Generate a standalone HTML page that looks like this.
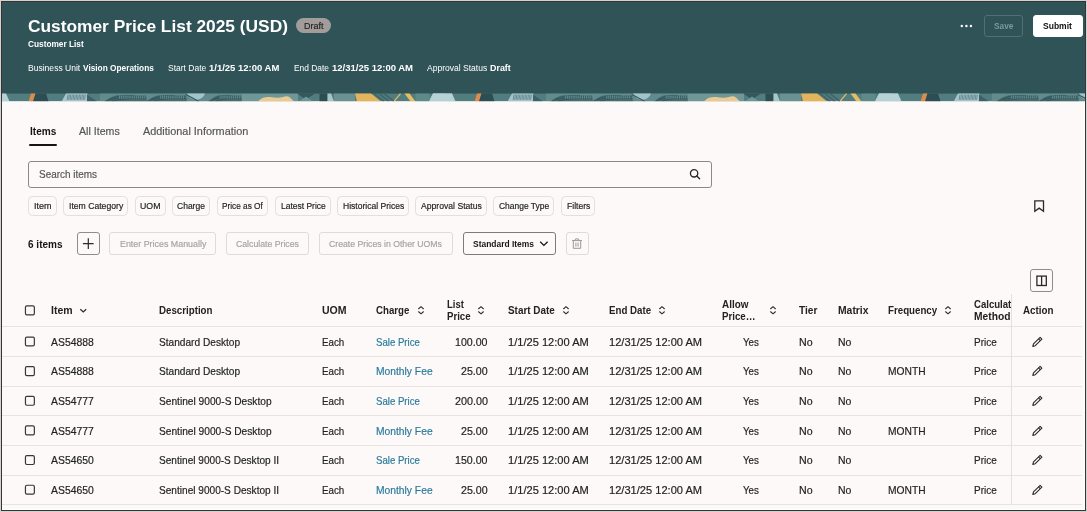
<!DOCTYPE html>
<html lang="en">
<head>
<meta charset="utf-8">
<title>Customer Price List 2025 (USD)</title>
<style>
html,body{margin:0;padding:0}
body{width:1087px;height:512px;overflow:hidden;background:#d2d2d2;font-family:"Liberation Sans",sans-serif}
.page{position:absolute;left:0;top:0;width:1087px;height:512px;overflow:hidden;will-change:transform}
.frame{position:absolute;left:1px;top:1px;width:1083px;height:508px;border:1px solid #353535;background:#fff}
.bg{position:absolute;left:2px;top:2px;width:1082px;height:507px;background:#fcf9f8}
.hdr{position:absolute;left:2px;top:2px;width:1083px;height:92px;background:#305357}
.strip{position:absolute;left:2px;top:93px;width:1083px;height:9px;display:block}
.r{-webkit-text-stroke:0.18px currentColor}
.t{position:absolute;display:block;white-space:pre;line-height:14px;height:14px;transform-origin:0 0}
.box{position:absolute;box-sizing:border-box;border:1px solid #dedbd8;border-radius:4px}
.badge{position:absolute;left:296.4px;top:17.9px;width:34.6px;height:14.9px;border-radius:8px;background:#a29d9a}
.line{position:absolute;left:2px;width:1080px;height:1px;background:#e6e3e0}
.cb{position:absolute;left:24.9px;width:9.9px;height:9.9px;box-sizing:border-box;border:1.2px solid #3a3632;border-radius:2px}
svg.i{position:absolute;overflow:visible}
</style>
</head>
<body>
<div class="page">
<div class="frame"></div>
<div class="bg"></div>
<header class="hdr"></header>
<svg class="strip" width="1083" height="9" viewBox="2 -0.6 1083 9" preserveAspectRatio="none"><rect x="0" y="-1" width="1090" height="1.2" fill="#305357"/><g transform="scale(1 0.975)"><g transform="translate(0 0)"><rect x="0" y="0" width="446" height="8" fill="#527d7e"/><polygon points="-13,0 6,0 9.5,8 -17,8" fill="#b6d2d7"/><polygon points="433,0 452,0 455.5,8 429,8" fill="#b6d2d7"/><polygon points="31,0 35.5,0 33,8 28.5,8" fill="#e08b4c"/><polygon points="35.5,0 46,0 48.5,8 33,8" fill="#2c4d52"/><polygon points="66,0 87.4,0 87.4,8 61.6,8" fill="#a6c5ca"/><path d="M68 1L67.2 6.4M69.45 1L68.65 6.4M70.9 1L70.1 6.4M72.35 1L71.55 6.4M73.8 1L73 6.4M75.25 1L74.45 6.4M76.7 1L75.9 6.4M78.15 1L77.35 6.4M79.6 1L78.8 6.4M81.05 1L80.25 6.4M82.5 1L81.7 6.4M83.95 1L83.15 6.4M85.4 1L84.6 6.4" stroke="#4f7378" stroke-width="0.7"/><polygon points="87,0.8 97,8 87,8" fill="#3d6165"/><rect x="100" y="0" width="142" height="8" fill="#628c8c"/><path d="M104 8 Q111.74 2.2 118.62 1.4 L146 1.8 L147 8 Z" fill="#456c6f"/><path d="M106 7.6 Q121.2 2.5 145 3.2 M112 7.8 Q125.5 4 146 5.2 M109 6 Q119.05 1 134.1 2" stroke="#2e5155" stroke-width="0.8" fill="none"/><path d="M119.48 1.8V5.2M121.38 1.8V5.2M123.28 1.8V5.2M125.18 1.8V5.2M127.08 1.8V5.2M128.98 1.8V5.2M130.88 1.8V5.2M132.78 1.8V5.2M134.68 1.8V5.2M136.58 1.8V5.2M138.48 1.8V5.2M140.38 1.8V5.2M142.28 1.8V5.2M144.18 1.8V5.2" stroke="#7fa3a4" stroke-width="0.6"/><path d="M146 8 Q153.38 2.2 159.94 1.4 L186 1.8 L187 8 Z" fill="#456c6f"/><path d="M148 7.6 Q162.4 2.5 185 3.2 M154 7.8 Q166.5 4 186 5.2 M151 6 Q160.35 1 174.7 2" stroke="#2e5155" stroke-width="0.8" fill="none"/><path d="M160.76 1.8V5.2M162.66 1.8V5.2M164.56 1.8V5.2M166.46 1.8V5.2M168.36 1.8V5.2M170.26 1.8V5.2M172.16 1.8V5.2M174.06 1.8V5.2M175.96 1.8V5.2M177.86 1.8V5.2M179.76 1.8V5.2M181.66 1.8V5.2M183.56 1.8V5.2" stroke="#7fa3a4" stroke-width="0.6"/><path d="M208 8 Q214.12 2.2 219.56 1.4 L241 1.8 L242 8 Z" fill="#456c6f"/><path d="M210 7.6 Q221.6 2.5 240 3.2 M216 7.8 Q225 4 241 5.2 M213 6 Q219.9 1 231.8 2" stroke="#2e5155" stroke-width="0.8" fill="none"/><path d="M220.24 1.8V5.2M222.14 1.8V5.2M224.04 1.8V5.2M225.94 1.8V5.2M227.84 1.8V5.2M229.74 1.8V5.2M231.64 1.8V5.2M233.54 1.8V5.2M235.44 1.8V5.2M237.34 1.8V5.2M239.24 1.8V5.2" stroke="#7fa3a4" stroke-width="0.6"/><path d="M187 0 H205 Q203 6 196 6.5 Q189 6 187 0Z" fill="#a3c4cc"/><path d="M186 1 L199 8" stroke="#34585c" stroke-width="1.2"/><rect x="242" y="0" width="56" height="8" fill="#6f9797"/><path d="M258 8 Q262 3 270 3.5 Q278 5 283 3.5 Q287 1.5 290 4 L294 8 Z" fill="#e9ca92"/><polygon points="297,0 315,0 306,6" fill="#35575b"/><polygon points="299,8 306,3 313,8" fill="#6f9797"/><rect x="319.5" y="0" width="8" height="8" fill="#2c4d52"/><polygon points="327.5,0 331,0 334,8 327.5,8" fill="#a8c6ca"/><rect x="334" y="0" width="21" height="8" fill="#6b9292"/><polygon points="355,0 371,0 381,8 357,8" fill="#e3b45c"/><path d="M374 0 L384 8 M379 0 L389 8 M384 0 L394 8" stroke="#3f6669" stroke-width="1.6"/><path d="M394 8 L400.5 0" stroke="#e6bd63" stroke-width="1.2"/><polygon points="404.5,0 409.5,0 415.5,8 410.5,8" fill="#e6bd63"/><rect x="415.5" y="0" width="14" height="8" fill="#5f8a8a"/></g><g transform="translate(446 0)"><rect x="0" y="0" width="446" height="8" fill="#527d7e"/><polygon points="-13,0 6,0 9.5,8 -17,8" fill="#b6d2d7"/><polygon points="433,0 452,0 455.5,8 429,8" fill="#b6d2d7"/><polygon points="31,0 35.5,0 33,8 28.5,8" fill="#e08b4c"/><polygon points="35.5,0 46,0 48.5,8 33,8" fill="#2c4d52"/><polygon points="66,0 87.4,0 87.4,8 61.6,8" fill="#a6c5ca"/><path d="M68 1L67.2 6.4M69.45 1L68.65 6.4M70.9 1L70.1 6.4M72.35 1L71.55 6.4M73.8 1L73 6.4M75.25 1L74.45 6.4M76.7 1L75.9 6.4M78.15 1L77.35 6.4M79.6 1L78.8 6.4M81.05 1L80.25 6.4M82.5 1L81.7 6.4M83.95 1L83.15 6.4M85.4 1L84.6 6.4" stroke="#4f7378" stroke-width="0.7"/><polygon points="87,0.8 97,8 87,8" fill="#3d6165"/><rect x="100" y="0" width="142" height="8" fill="#628c8c"/><path d="M104 8 Q111.74 2.2 118.62 1.4 L146 1.8 L147 8 Z" fill="#456c6f"/><path d="M106 7.6 Q121.2 2.5 145 3.2 M112 7.8 Q125.5 4 146 5.2 M109 6 Q119.05 1 134.1 2" stroke="#2e5155" stroke-width="0.8" fill="none"/><path d="M119.48 1.8V5.2M121.38 1.8V5.2M123.28 1.8V5.2M125.18 1.8V5.2M127.08 1.8V5.2M128.98 1.8V5.2M130.88 1.8V5.2M132.78 1.8V5.2M134.68 1.8V5.2M136.58 1.8V5.2M138.48 1.8V5.2M140.38 1.8V5.2M142.28 1.8V5.2M144.18 1.8V5.2" stroke="#7fa3a4" stroke-width="0.6"/><path d="M146 8 Q153.38 2.2 159.94 1.4 L186 1.8 L187 8 Z" fill="#456c6f"/><path d="M148 7.6 Q162.4 2.5 185 3.2 M154 7.8 Q166.5 4 186 5.2 M151 6 Q160.35 1 174.7 2" stroke="#2e5155" stroke-width="0.8" fill="none"/><path d="M160.76 1.8V5.2M162.66 1.8V5.2M164.56 1.8V5.2M166.46 1.8V5.2M168.36 1.8V5.2M170.26 1.8V5.2M172.16 1.8V5.2M174.06 1.8V5.2M175.96 1.8V5.2M177.86 1.8V5.2M179.76 1.8V5.2M181.66 1.8V5.2M183.56 1.8V5.2" stroke="#7fa3a4" stroke-width="0.6"/><path d="M208 8 Q214.12 2.2 219.56 1.4 L241 1.8 L242 8 Z" fill="#456c6f"/><path d="M210 7.6 Q221.6 2.5 240 3.2 M216 7.8 Q225 4 241 5.2 M213 6 Q219.9 1 231.8 2" stroke="#2e5155" stroke-width="0.8" fill="none"/><path d="M220.24 1.8V5.2M222.14 1.8V5.2M224.04 1.8V5.2M225.94 1.8V5.2M227.84 1.8V5.2M229.74 1.8V5.2M231.64 1.8V5.2M233.54 1.8V5.2M235.44 1.8V5.2M237.34 1.8V5.2M239.24 1.8V5.2" stroke="#7fa3a4" stroke-width="0.6"/><path d="M187 0 H205 Q203 6 196 6.5 Q189 6 187 0Z" fill="#a3c4cc"/><path d="M186 1 L199 8" stroke="#34585c" stroke-width="1.2"/><rect x="242" y="0" width="56" height="8" fill="#6f9797"/><path d="M258 8 Q262 3 270 3.5 Q278 5 283 3.5 Q287 1.5 290 4 L294 8 Z" fill="#e9ca92"/><polygon points="297,0 315,0 306,6" fill="#35575b"/><polygon points="299,8 306,3 313,8" fill="#6f9797"/><rect x="319.5" y="0" width="8" height="8" fill="#2c4d52"/><polygon points="327.5,0 331,0 334,8 327.5,8" fill="#a8c6ca"/><rect x="334" y="0" width="21" height="8" fill="#6b9292"/><polygon points="355,0 371,0 381,8 357,8" fill="#e3b45c"/><path d="M374 0 L384 8 M379 0 L389 8 M384 0 L394 8" stroke="#3f6669" stroke-width="1.6"/><path d="M394 8 L400.5 0" stroke="#e6bd63" stroke-width="1.2"/><polygon points="404.5,0 409.5,0 415.5,8 410.5,8" fill="#e6bd63"/><rect x="415.5" y="0" width="14" height="8" fill="#5f8a8a"/></g><g transform="translate(892 0)"><rect x="0" y="0" width="446" height="8" fill="#527d7e"/><polygon points="-13,0 6,0 9.5,8 -17,8" fill="#b6d2d7"/><polygon points="433,0 452,0 455.5,8 429,8" fill="#b6d2d7"/><polygon points="31,0 35.5,0 33,8 28.5,8" fill="#e08b4c"/><polygon points="35.5,0 46,0 48.5,8 33,8" fill="#2c4d52"/><polygon points="66,0 87.4,0 87.4,8 61.6,8" fill="#a6c5ca"/><path d="M68 1L67.2 6.4M69.45 1L68.65 6.4M70.9 1L70.1 6.4M72.35 1L71.55 6.4M73.8 1L73 6.4M75.25 1L74.45 6.4M76.7 1L75.9 6.4M78.15 1L77.35 6.4M79.6 1L78.8 6.4M81.05 1L80.25 6.4M82.5 1L81.7 6.4M83.95 1L83.15 6.4M85.4 1L84.6 6.4" stroke="#4f7378" stroke-width="0.7"/><polygon points="87,0.8 97,8 87,8" fill="#3d6165"/><rect x="100" y="0" width="142" height="8" fill="#628c8c"/><path d="M104 8 Q111.74 2.2 118.62 1.4 L146 1.8 L147 8 Z" fill="#456c6f"/><path d="M106 7.6 Q121.2 2.5 145 3.2 M112 7.8 Q125.5 4 146 5.2 M109 6 Q119.05 1 134.1 2" stroke="#2e5155" stroke-width="0.8" fill="none"/><path d="M119.48 1.8V5.2M121.38 1.8V5.2M123.28 1.8V5.2M125.18 1.8V5.2M127.08 1.8V5.2M128.98 1.8V5.2M130.88 1.8V5.2M132.78 1.8V5.2M134.68 1.8V5.2M136.58 1.8V5.2M138.48 1.8V5.2M140.38 1.8V5.2M142.28 1.8V5.2M144.18 1.8V5.2" stroke="#7fa3a4" stroke-width="0.6"/><path d="M146 8 Q153.38 2.2 159.94 1.4 L186 1.8 L187 8 Z" fill="#456c6f"/><path d="M148 7.6 Q162.4 2.5 185 3.2 M154 7.8 Q166.5 4 186 5.2 M151 6 Q160.35 1 174.7 2" stroke="#2e5155" stroke-width="0.8" fill="none"/><path d="M160.76 1.8V5.2M162.66 1.8V5.2M164.56 1.8V5.2M166.46 1.8V5.2M168.36 1.8V5.2M170.26 1.8V5.2M172.16 1.8V5.2M174.06 1.8V5.2M175.96 1.8V5.2M177.86 1.8V5.2M179.76 1.8V5.2M181.66 1.8V5.2M183.56 1.8V5.2" stroke="#7fa3a4" stroke-width="0.6"/><path d="M208 8 Q214.12 2.2 219.56 1.4 L241 1.8 L242 8 Z" fill="#456c6f"/><path d="M210 7.6 Q221.6 2.5 240 3.2 M216 7.8 Q225 4 241 5.2 M213 6 Q219.9 1 231.8 2" stroke="#2e5155" stroke-width="0.8" fill="none"/><path d="M220.24 1.8V5.2M222.14 1.8V5.2M224.04 1.8V5.2M225.94 1.8V5.2M227.84 1.8V5.2M229.74 1.8V5.2M231.64 1.8V5.2M233.54 1.8V5.2M235.44 1.8V5.2M237.34 1.8V5.2M239.24 1.8V5.2" stroke="#7fa3a4" stroke-width="0.6"/><path d="M187 0 H205 Q203 6 196 6.5 Q189 6 187 0Z" fill="#a3c4cc"/><path d="M186 1 L199 8" stroke="#34585c" stroke-width="1.2"/><rect x="242" y="0" width="56" height="8" fill="#6f9797"/><path d="M258 8 Q262 3 270 3.5 Q278 5 283 3.5 Q287 1.5 290 4 L294 8 Z" fill="#e9ca92"/><polygon points="297,0 315,0 306,6" fill="#35575b"/><polygon points="299,8 306,3 313,8" fill="#6f9797"/><rect x="319.5" y="0" width="8" height="8" fill="#2c4d52"/><polygon points="327.5,0 331,0 334,8 327.5,8" fill="#a8c6ca"/><rect x="334" y="0" width="21" height="8" fill="#6b9292"/><polygon points="355,0 371,0 381,8 357,8" fill="#e3b45c"/><path d="M374 0 L384 8 M379 0 L389 8 M384 0 L394 8" stroke="#3f6669" stroke-width="1.6"/><path d="M394 8 L400.5 0" stroke="#e6bd63" stroke-width="1.2"/><polygon points="404.5,0 409.5,0 415.5,8 410.5,8" fill="#e6bd63"/><rect x="415.5" y="0" width="14" height="8" fill="#5f8a8a"/></g></g><rect x="0" y="7.8" width="1090" height="1" fill="#fcf9f8"/></svg>
<div class="badge"></div>
<div class="box" style="left:984px;top:15px;width:39px;height:22px;border-color:#4f7074;border-radius:3px;"></div>
<div class="box" style="left:1033px;top:15px;width:50px;height:22px;border-color:#fff;border-radius:3px;background:#fff;"></div>
<div style="position:absolute;left:29.2px;top:143.7px;width:27.6px;height:2px;border-radius:1px;background:#161513"></div>
<div class="box" style="left:28px;top:161px;width:684px;height:27px;border-color:#8b8885;border-radius:3px;"></div>
<div class="box" style="left:28px;top:196px;width:29px;height:20px;border-color:#e2dfdc;border-radius:4.5px;"></div>
<div class="box" style="left:63px;top:196px;width:65px;height:20px;border-color:#e2dfdc;border-radius:4.5px;"></div>
<div class="box" style="left:135px;top:196px;width:31px;height:20px;border-color:#e2dfdc;border-radius:4.5px;"></div>
<div class="box" style="left:172px;top:196px;width:38px;height:20px;border-color:#e2dfdc;border-radius:4.5px;"></div>
<div class="box" style="left:217px;top:196px;width:51px;height:20px;border-color:#e2dfdc;border-radius:4.5px;"></div>
<div class="box" style="left:275px;top:196px;width:56px;height:20px;border-color:#e2dfdc;border-radius:4.5px;"></div>
<div class="box" style="left:337px;top:196px;width:72px;height:20px;border-color:#e2dfdc;border-radius:4.5px;"></div>
<div class="box" style="left:415px;top:196px;width:72px;height:20px;border-color:#e2dfdc;border-radius:4.5px;"></div>
<div class="box" style="left:493px;top:196px;width:61px;height:20px;border-color:#e2dfdc;border-radius:4.5px;"></div>
<div class="box" style="left:561px;top:196px;width:34px;height:20px;border-color:#e2dfdc;border-radius:4.5px;"></div>
<div class="box" style="left:77px;top:232px;width:23px;height:23px;border-color:#8f8c89;border-radius:3px;"></div>
<div class="box" style="left:109px;top:232px;width:107px;height:23px;border-color:#dedbd8;border-radius:3px;"></div>
<div class="box" style="left:226px;top:232px;width:83px;height:23px;border-color:#dedbd8;border-radius:3px;"></div>
<div class="box" style="left:319px;top:232px;width:134px;height:23px;border-color:#dedbd8;border-radius:3px;"></div>
<div class="box" style="left:463px;top:232px;width:93px;height:23px;border-color:#7d7a77;border-radius:3px;"></div>
<div class="box" style="left:566px;top:232px;width:23px;height:23px;border-color:#dedbd8;border-radius:3px;"></div>
<div class="box" style="left:1030px;top:269px;width:23px;height:23px;border-color:#8f8c89;border-radius:3px;"></div>
<div class="line" style="top:326px"></div>
<div class="line" style="top:356px"></div>
<div class="line" style="top:386px"></div>
<div class="line" style="top:415px"></div>
<div class="line" style="top:445px"></div>
<div class="line" style="top:475px"></div>
<div class="line" style="top:504px"></div>
<div style="position:absolute;left:1011px;top:294px;width:1px;height:211px;background:#e3e0dd"></div>
<svg class="i" style="left:0;top:0" width="60" height="512" viewBox="0 0 60 512" fill="none" stroke="#3a3632" stroke-width="1.2"><rect x="25.45" y="305.95" width="8.9" height="8.9" rx="1.4"/><rect x="25.45" y="337.05" width="8.9" height="8.9" rx="1.4"/><rect x="25.45" y="366.69" width="8.9" height="8.9" rx="1.4"/><rect x="25.45" y="396.33" width="8.9" height="8.9" rx="1.4"/><rect x="25.45" y="425.97" width="8.9" height="8.9" rx="1.4"/><rect x="25.45" y="455.61" width="8.9" height="8.9" rx="1.4"/><rect x="25.45" y="485.25" width="8.9" height="8.9" rx="1.4"/></svg>
<svg class="i" style="left:958.00px;top:22.00px" width="16" height="8" viewBox="0 0 16 8" fill="none"><circle cx="3.8" cy="4" r="1.2" fill="#fff"/><circle cx="8.4" cy="4" r="1.2" fill="#fff"/><circle cx="12.9" cy="4" r="1.2" fill="#fff"/></svg>
<svg class="i" style="left:688.00px;top:167.00px" width="14" height="14" viewBox="0 0 14 14" fill="none"><circle cx="6.1" cy="6.3" r="3.7" stroke="#2b2926" stroke-width="1.3"/><path d="M8.8 9 L11.6 11.7" stroke="#2b2926" stroke-width="1.4" stroke-linecap="round"/></svg>
<svg class="i" style="left:1033.00px;top:199.00px" width="13" height="15" viewBox="0 0 13 15" fill="none"><path d="M1.8 1.9 H10.5 V12.2 L6.15 9.1 L1.8 12.2 Z" stroke="#2b2926" stroke-width="1.3" stroke-linejoin="miter"/></svg>
<svg class="i" style="left:82.00px;top:237.00px" width="13" height="13" viewBox="0 0 13 13" fill="none"><path d="M0.9 6.6 H11.6 M6.3 1.3 V11.9" stroke="#2b2926" stroke-width="1.2"/></svg>
<svg class="i" style="left:539.00px;top:240.00px" width="10" height="8" viewBox="0 0 10 8" fill="none"><path d="M1.2 1.8 L4.9 5.4 L8.6 1.8" stroke="#161513" stroke-width="1.3"/></svg>
<svg class="i" style="left:571.00px;top:237.00px" width="13" height="13" viewBox="0 0 13 13" fill="none"><g stroke="#9b9895" stroke-width="1"><path d="M1 3.6 H11"/><path d="M3.9 3.4 L4.6 1.9 H7.4 L8.1 3.4"/><path d="M2.3 3.8 V11.3 H9.7 V3.8"/><path d="M4.9 5.6 V9.6 M7.1 5.6 V9.6"/></g></svg>
<svg class="i" style="left:1035.00px;top:274.00px" width="14" height="14" viewBox="0 0 14 14" fill="none"><rect x="1.9" y="2.1" width="9.4" height="9.4" stroke="#2b2926" stroke-width="1.3"/><path d="M6.6 2.1 V11.5" stroke="#2b2926" stroke-width="1.3"/></svg>
<svg class="i" style="left:79.00px;top:307.00px" width="9" height="7" viewBox="0 0 9 7" fill="none"><path d="M1.3 2.2 L4.25 5 L7.2 2.2" stroke="#2b2926" stroke-width="1.2"/></svg>
<svg class="i" style="left:416.00px;top:305.00px" width="10" height="10" viewBox="0 0 10 10" fill="none"><path d="M2.35 4 L5 1.65 L7.65 4 M2.35 6.5 L5 8.85 L7.65 6.5" stroke="#2b2926" stroke-width="1.1"/></svg>
<svg class="i" style="left:476.40px;top:305.00px" width="10" height="10" viewBox="0 0 10 10" fill="none"><path d="M2.35 4 L5 1.65 L7.65 4 M2.35 6.5 L5 8.85 L7.65 6.5" stroke="#2b2926" stroke-width="1.1"/></svg>
<svg class="i" style="left:560.80px;top:305.00px" width="10" height="10" viewBox="0 0 10 10" fill="none"><path d="M2.35 4 L5 1.65 L7.65 4 M2.35 6.5 L5 8.85 L7.65 6.5" stroke="#2b2926" stroke-width="1.1"/></svg>
<svg class="i" style="left:656.90px;top:305.00px" width="10" height="10" viewBox="0 0 10 10" fill="none"><path d="M2.35 4 L5 1.65 L7.65 4 M2.35 6.5 L5 8.85 L7.65 6.5" stroke="#2b2926" stroke-width="1.1"/></svg>
<svg class="i" style="left:768.00px;top:305.00px" width="10" height="10" viewBox="0 0 10 10" fill="none"><path d="M2.35 4 L5 1.65 L7.65 4 M2.35 6.5 L5 8.85 L7.65 6.5" stroke="#2b2926" stroke-width="1.1"/></svg>
<svg class="i" style="left:942.90px;top:305.00px" width="10" height="10" viewBox="0 0 10 10" fill="none"><path d="M2.35 4 L5 1.65 L7.65 4 M2.35 6.5 L5 8.85 L7.65 6.5" stroke="#2b2926" stroke-width="1.1"/></svg>
<svg class="i" style="left:1031.00px;top:335.60px" width="14" height="13" viewBox="0 0 14 13" fill="none"><g stroke="#2b2926" stroke-width="1.1" stroke-linejoin="round"><path d="M1.8 10.4 L2.47 7.96 L9.12 1.32 L10.88 3.08 L4.24 9.73 Z"/><path d="M7.49 2.95 L9.25 4.71"/></g></svg>
<svg class="i" style="left:1031.00px;top:365.24px" width="14" height="13" viewBox="0 0 14 13" fill="none"><g stroke="#2b2926" stroke-width="1.1" stroke-linejoin="round"><path d="M1.8 10.4 L2.47 7.96 L9.12 1.32 L10.88 3.08 L4.24 9.73 Z"/><path d="M7.49 2.95 L9.25 4.71"/></g></svg>
<svg class="i" style="left:1031.00px;top:394.88px" width="14" height="13" viewBox="0 0 14 13" fill="none"><g stroke="#2b2926" stroke-width="1.1" stroke-linejoin="round"><path d="M1.8 10.4 L2.47 7.96 L9.12 1.32 L10.88 3.08 L4.24 9.73 Z"/><path d="M7.49 2.95 L9.25 4.71"/></g></svg>
<svg class="i" style="left:1031.00px;top:424.52px" width="14" height="13" viewBox="0 0 14 13" fill="none"><g stroke="#2b2926" stroke-width="1.1" stroke-linejoin="round"><path d="M1.8 10.4 L2.47 7.96 L9.12 1.32 L10.88 3.08 L4.24 9.73 Z"/><path d="M7.49 2.95 L9.25 4.71"/></g></svg>
<svg class="i" style="left:1031.00px;top:454.16px" width="14" height="13" viewBox="0 0 14 13" fill="none"><g stroke="#2b2926" stroke-width="1.1" stroke-linejoin="round"><path d="M1.8 10.4 L2.47 7.96 L9.12 1.32 L10.88 3.08 L4.24 9.73 Z"/><path d="M7.49 2.95 L9.25 4.71"/></g></svg>
<svg class="i" style="left:1031.00px;top:483.80px" width="14" height="13" viewBox="0 0 14 13" fill="none"><g stroke="#2b2926" stroke-width="1.1" stroke-linejoin="round"><path d="M1.8 10.4 L2.47 7.96 L9.12 1.32 L10.88 3.08 L4.24 9.73 Z"/><path d="M7.49 2.95 L9.25 4.71"/></g></svg>
<span class="t" style="left:27.73px;top:18.67px;font-size:17.4px;font-weight:700;color:#fff;transform:scaleX(0.9961)">Customer Price List 2025 (USD)</span>
<span class="t" style="left:28.12px;top:37.41px;font-size:9.5px;font-weight:700;color:#fff;transform:scaleX(0.8728)">Customer List</span>
<span class="t" style="left:28.12px;top:60.91px;font-size:9.5px;font-weight:400;color:#fff;transform:scaleX(0.8994)">Business Unit</span>
<span class="t" style="left:83.23px;top:60.91px;font-size:9.5px;font-weight:700;color:#fff;transform:scaleX(0.8733)">Vision Operations</span>
<span class="t" style="left:168.43px;top:60.91px;font-size:9.5px;font-weight:400;color:#fff;transform:scaleX(0.8941)">Start Date</span>
<span class="t" style="left:209.43px;top:60.91px;font-size:9.5px;font-weight:700;color:#fff;transform:scaleX(0.9990)">1/1/25 12:00 AM</span>
<span class="t" style="left:294.22px;top:60.91px;font-size:9.5px;font-weight:400;color:#fff;transform:scaleX(0.8845)">End Date</span>
<span class="t" style="left:331.92px;top:60.91px;font-size:9.5px;font-weight:700;color:#fff;transform:scaleX(1.0008)">12/31/25 12:00 AM</span>
<span class="t" style="left:427.22px;top:60.91px;font-size:9.5px;font-weight:400;color:#fff;transform:scaleX(0.8982)">Approval Status</span>
<span class="t" style="left:490.42px;top:60.91px;font-size:9.5px;font-weight:700;color:#fff;transform:scaleX(0.9359)">Draft</span>
<span class="t r" style="left:303.74px;top:18.51px;font-size:9.2px;font-weight:400;color:#1f1f1f;transform:scaleX(0.9748)">Draft</span>
<span class="t" style="left:993.91px;top:18.70px;font-size:9.8px;font-weight:700;color:#7a999c;transform:scaleX(0.8466)">Save</span>
<span class="t" style="left:1043.41px;top:18.70px;font-size:9.8px;font-weight:700;color:#111;transform:scaleX(0.8698)">Submit</span>
<span class="t" style="left:30.05px;top:124.39px;font-size:11px;font-weight:700;color:#161513;transform:scaleX(0.9183)">Items</span>
<span class="t r" style="left:79.25px;top:124.39px;font-size:11px;font-weight:400;color:#555;transform:scaleX(0.9647)">All Items</span>
<span class="t r" style="left:142.95px;top:124.39px;font-size:11px;font-weight:400;color:#555;transform:scaleX(0.9896)">Additional Information</span>
<span class="t r" style="left:38.57px;top:167.33px;font-size:10.6px;font-weight:400;color:#555;transform:scaleX(0.9391)">Search items</span>
<span class="t r" style="left:33.84px;top:199.01px;font-size:9.2px;font-weight:400;color:#222;transform:scaleX(0.9801)">Item</span>
<span class="t r" style="left:68.84px;top:199.01px;font-size:9.2px;font-weight:400;color:#222;transform:scaleX(0.9396)">Item Category</span>
<span class="t r" style="left:140.04px;top:199.01px;font-size:9.2px;font-weight:400;color:#222;transform:scaleX(0.9525)">UOM</span>
<span class="t r" style="left:177.34px;top:199.01px;font-size:9.2px;font-weight:400;color:#222;transform:scaleX(0.9263)">Charge</span>
<span class="t r" style="left:222.44px;top:199.01px;font-size:9.2px;font-weight:400;color:#222;transform:scaleX(0.8981)">Price as Of</span>
<span class="t r" style="left:280.64px;top:199.01px;font-size:9.2px;font-weight:400;color:#222;transform:scaleX(0.9218)">Latest Price</span>
<span class="t r" style="left:342.54px;top:199.01px;font-size:9.2px;font-weight:400;color:#222;transform:scaleX(0.9311)">Historical Prices</span>
<span class="t r" style="left:420.94px;top:199.01px;font-size:9.2px;font-weight:400;color:#222;transform:scaleX(0.9375)">Approval Status</span>
<span class="t r" style="left:498.94px;top:199.01px;font-size:9.2px;font-weight:400;color:#222;transform:scaleX(0.9215)">Change Type</span>
<span class="t r" style="left:566.54px;top:199.01px;font-size:9.2px;font-weight:400;color:#222;transform:scaleX(0.9322)">Filters</span>
<span class="t" style="left:28.13px;top:236.58px;font-size:11.3px;font-weight:700;color:#161513;transform:scaleX(0.8868)">6 items</span>
<span class="t r" style="left:119.53px;top:236.51px;font-size:9.5px;font-weight:400;color:#a5a3a1;transform:scaleX(0.9345)">Enter Prices Manually</span>
<span class="t r" style="left:236.43px;top:236.51px;font-size:9.5px;font-weight:400;color:#a5a3a1;transform:scaleX(0.9156)">Calculate Prices</span>
<span class="t r" style="left:329.32px;top:236.51px;font-size:9.5px;font-weight:400;color:#a5a3a1;transform:scaleX(0.9142)">Create Prices in Other UOMs</span>
<span class="t" style="left:472.52px;top:236.51px;font-size:9.5px;font-weight:700;color:#161513;transform:scaleX(0.8880)">Standard Items</span>
<span class="t" style="left:51.05px;top:303.29px;font-size:11px;font-weight:700;color:#222;transform:scaleX(0.9547)">Item</span>
<span class="t" style="left:159.45px;top:303.29px;font-size:11px;font-weight:700;color:#222;transform:scaleX(0.8841)">Description</span>
<span class="t" style="left:321.95px;top:303.29px;font-size:11px;font-weight:700;color:#222;transform:scaleX(0.9582)">UOM</span>
<span class="t" style="left:376.45px;top:303.29px;font-size:11px;font-weight:700;color:#222;transform:scaleX(0.8785)">Charge</span>
<span class="t" style="left:447.15px;top:297.19px;font-size:11px;font-weight:700;color:#222;transform:scaleX(0.8639)">List</span>
<span class="t" style="left:447.15px;top:309.09px;font-size:11px;font-weight:700;color:#222;transform:scaleX(0.8766)">Price</span>
<span class="t" style="left:507.75px;top:303.29px;font-size:11px;font-weight:700;color:#222;transform:scaleX(0.9005)">Start Date</span>
<span class="t" style="left:608.65px;top:303.29px;font-size:11px;font-weight:700;color:#222;transform:scaleX(0.8828)">End Date</span>
<span class="t" style="left:721.55px;top:297.19px;font-size:11px;font-weight:700;color:#222;transform:scaleX(0.8997)">Allow</span>
<span class="t" style="left:721.55px;top:309.09px;font-size:11px;font-weight:700;color:#222;transform:scaleX(0.8834)">Price…</span>
<span class="t" style="left:799.45px;top:303.29px;font-size:11px;font-weight:700;color:#222;transform:scaleX(0.9207)">Tier</span>
<span class="t" style="left:838.15px;top:303.29px;font-size:11px;font-weight:700;color:#222;transform:scaleX(0.9412)">Matrix</span>
<span class="t" style="left:888.25px;top:303.29px;font-size:11px;font-weight:700;color:#222;transform:scaleX(0.8842)">Frequency</span>
<span class="t" style="left:974.25px;top:297.19px;font-size:11px;font-weight:700;color:#222;transform:scaleX(0.8716)">Calculat</span>
<span class="t" style="left:974.25px;top:309.09px;font-size:11px;font-weight:700;color:#222;transform:scaleX(0.9307)">Method</span>
<span class="t" style="left:1022.55px;top:303.29px;font-size:11px;font-weight:700;color:#222;transform:scaleX(0.8909)">Action</span>
<span class="t r" style="left:51.05px;top:334.69px;font-size:11px;font-weight:400;color:#222;transform:scaleX(0.9477)">AS54888</span>
<span class="t r" style="left:159.45px;top:334.69px;font-size:11px;font-weight:400;color:#222;transform:scaleX(0.9209)">Standard Desktop</span>
<span class="t r" style="left:321.95px;top:334.69px;font-size:11px;font-weight:400;color:#222;transform:scaleX(0.8892)">Each</span>
<span class="t r" style="left:376.45px;top:334.69px;font-size:11px;font-weight:400;color:#2a7a9b;transform:scaleX(0.8755)">Sale Price</span>
<span class="t r" style="left:455.45px;top:334.69px;font-size:11px;font-weight:400;color:#222;transform:scaleX(0.9656)">100.00</span>
<span class="t r" style="left:507.75px;top:334.69px;font-size:11px;font-weight:400;color:#222;transform:scaleX(1.0084)">1/1/25 12:00 AM</span>
<span class="t r" style="left:608.65px;top:334.69px;font-size:11px;font-weight:400;color:#222;transform:scaleX(1.0080)">12/31/25 12:00 AM</span>
<span class="t r" style="left:742.65px;top:334.69px;font-size:11px;font-weight:400;color:#222;transform:scaleX(0.8856)">Yes</span>
<span class="t r" style="left:799.45px;top:334.69px;font-size:11px;font-weight:400;color:#222;transform:scaleX(0.9671)">No</span>
<span class="t r" style="left:838.15px;top:334.69px;font-size:11px;font-weight:400;color:#222;transform:scaleX(0.9529)">No</span>
<span class="t r" style="left:974.25px;top:334.69px;font-size:11px;font-weight:400;color:#222;transform:scaleX(0.9057)">Price</span>
<span class="t r" style="left:51.05px;top:364.33px;font-size:11px;font-weight:400;color:#222;transform:scaleX(0.9477)">AS54888</span>
<span class="t r" style="left:159.45px;top:364.33px;font-size:11px;font-weight:400;color:#222;transform:scaleX(0.9209)">Standard Desktop</span>
<span class="t r" style="left:321.95px;top:364.33px;font-size:11px;font-weight:400;color:#222;transform:scaleX(0.8892)">Each</span>
<span class="t r" style="left:376.45px;top:364.33px;font-size:11px;font-weight:400;color:#2a7a9b;transform:scaleX(0.9351)">Monthly Fee</span>
<span class="t r" style="left:461.25px;top:364.33px;font-size:11px;font-weight:400;color:#222;transform:scaleX(0.9698)">25.00</span>
<span class="t r" style="left:507.75px;top:364.33px;font-size:11px;font-weight:400;color:#222;transform:scaleX(1.0084)">1/1/25 12:00 AM</span>
<span class="t r" style="left:608.65px;top:364.33px;font-size:11px;font-weight:400;color:#222;transform:scaleX(1.0080)">12/31/25 12:00 AM</span>
<span class="t r" style="left:742.65px;top:364.33px;font-size:11px;font-weight:400;color:#222;transform:scaleX(0.8856)">Yes</span>
<span class="t r" style="left:799.45px;top:364.33px;font-size:11px;font-weight:400;color:#222;transform:scaleX(0.9671)">No</span>
<span class="t r" style="left:838.15px;top:364.33px;font-size:11px;font-weight:400;color:#222;transform:scaleX(0.9529)">No</span>
<span class="t r" style="left:888.25px;top:364.33px;font-size:11px;font-weight:400;color:#222;transform:scaleX(0.9324)">MONTH</span>
<span class="t r" style="left:974.25px;top:364.33px;font-size:11px;font-weight:400;color:#222;transform:scaleX(0.9057)">Price</span>
<span class="t r" style="left:51.05px;top:393.97px;font-size:11px;font-weight:400;color:#222;transform:scaleX(0.9477)">AS54777</span>
<span class="t r" style="left:159.45px;top:393.97px;font-size:11px;font-weight:400;color:#222;transform:scaleX(0.9253)">Sentinel 9000-S Desktop</span>
<span class="t r" style="left:321.95px;top:393.97px;font-size:11px;font-weight:400;color:#222;transform:scaleX(0.8892)">Each</span>
<span class="t r" style="left:376.45px;top:393.97px;font-size:11px;font-weight:400;color:#2a7a9b;transform:scaleX(0.8755)">Sale Price</span>
<span class="t r" style="left:454.95px;top:393.97px;font-size:11px;font-weight:400;color:#222;transform:scaleX(0.9805)">200.00</span>
<span class="t r" style="left:507.75px;top:393.97px;font-size:11px;font-weight:400;color:#222;transform:scaleX(1.0084)">1/1/25 12:00 AM</span>
<span class="t r" style="left:608.65px;top:393.97px;font-size:11px;font-weight:400;color:#222;transform:scaleX(1.0080)">12/31/25 12:00 AM</span>
<span class="t r" style="left:742.65px;top:393.97px;font-size:11px;font-weight:400;color:#222;transform:scaleX(0.8856)">Yes</span>
<span class="t r" style="left:799.45px;top:393.97px;font-size:11px;font-weight:400;color:#222;transform:scaleX(0.9671)">No</span>
<span class="t r" style="left:838.15px;top:393.97px;font-size:11px;font-weight:400;color:#222;transform:scaleX(0.9529)">No</span>
<span class="t r" style="left:974.25px;top:393.97px;font-size:11px;font-weight:400;color:#222;transform:scaleX(0.9057)">Price</span>
<span class="t r" style="left:51.05px;top:423.61px;font-size:11px;font-weight:400;color:#222;transform:scaleX(0.9477)">AS54777</span>
<span class="t r" style="left:159.45px;top:423.61px;font-size:11px;font-weight:400;color:#222;transform:scaleX(0.9253)">Sentinel 9000-S Desktop</span>
<span class="t r" style="left:321.95px;top:423.61px;font-size:11px;font-weight:400;color:#222;transform:scaleX(0.8892)">Each</span>
<span class="t r" style="left:376.45px;top:423.61px;font-size:11px;font-weight:400;color:#2a7a9b;transform:scaleX(0.9351)">Monthly Fee</span>
<span class="t r" style="left:461.25px;top:423.61px;font-size:11px;font-weight:400;color:#222;transform:scaleX(0.9698)">25.00</span>
<span class="t r" style="left:507.75px;top:423.61px;font-size:11px;font-weight:400;color:#222;transform:scaleX(1.0084)">1/1/25 12:00 AM</span>
<span class="t r" style="left:608.65px;top:423.61px;font-size:11px;font-weight:400;color:#222;transform:scaleX(1.0080)">12/31/25 12:00 AM</span>
<span class="t r" style="left:742.65px;top:423.61px;font-size:11px;font-weight:400;color:#222;transform:scaleX(0.8856)">Yes</span>
<span class="t r" style="left:799.45px;top:423.61px;font-size:11px;font-weight:400;color:#222;transform:scaleX(0.9671)">No</span>
<span class="t r" style="left:838.15px;top:423.61px;font-size:11px;font-weight:400;color:#222;transform:scaleX(0.9529)">No</span>
<span class="t r" style="left:888.25px;top:423.61px;font-size:11px;font-weight:400;color:#222;transform:scaleX(0.9324)">MONTH</span>
<span class="t r" style="left:974.25px;top:423.61px;font-size:11px;font-weight:400;color:#222;transform:scaleX(0.9057)">Price</span>
<span class="t r" style="left:51.05px;top:453.25px;font-size:11px;font-weight:400;color:#222;transform:scaleX(0.9477)">AS54650</span>
<span class="t r" style="left:159.45px;top:453.25px;font-size:11px;font-weight:400;color:#222;transform:scaleX(0.9178)">Sentinel 9000-S Desktop II</span>
<span class="t r" style="left:321.95px;top:453.25px;font-size:11px;font-weight:400;color:#222;transform:scaleX(0.8892)">Each</span>
<span class="t r" style="left:376.45px;top:453.25px;font-size:11px;font-weight:400;color:#2a7a9b;transform:scaleX(0.8755)">Sale Price</span>
<span class="t r" style="left:455.45px;top:453.25px;font-size:11px;font-weight:400;color:#222;transform:scaleX(0.9656)">150.00</span>
<span class="t r" style="left:507.75px;top:453.25px;font-size:11px;font-weight:400;color:#222;transform:scaleX(1.0084)">1/1/25 12:00 AM</span>
<span class="t r" style="left:608.65px;top:453.25px;font-size:11px;font-weight:400;color:#222;transform:scaleX(1.0080)">12/31/25 12:00 AM</span>
<span class="t r" style="left:742.65px;top:453.25px;font-size:11px;font-weight:400;color:#222;transform:scaleX(0.8856)">Yes</span>
<span class="t r" style="left:799.45px;top:453.25px;font-size:11px;font-weight:400;color:#222;transform:scaleX(0.9671)">No</span>
<span class="t r" style="left:838.15px;top:453.25px;font-size:11px;font-weight:400;color:#222;transform:scaleX(0.9529)">No</span>
<span class="t r" style="left:974.25px;top:453.25px;font-size:11px;font-weight:400;color:#222;transform:scaleX(0.9057)">Price</span>
<span class="t r" style="left:51.05px;top:482.89px;font-size:11px;font-weight:400;color:#222;transform:scaleX(0.9477)">AS54650</span>
<span class="t r" style="left:159.45px;top:482.89px;font-size:11px;font-weight:400;color:#222;transform:scaleX(0.9178)">Sentinel 9000-S Desktop II</span>
<span class="t r" style="left:321.95px;top:482.89px;font-size:11px;font-weight:400;color:#222;transform:scaleX(0.8892)">Each</span>
<span class="t r" style="left:376.45px;top:482.89px;font-size:11px;font-weight:400;color:#2a7a9b;transform:scaleX(0.9351)">Monthly Fee</span>
<span class="t r" style="left:461.25px;top:482.89px;font-size:11px;font-weight:400;color:#222;transform:scaleX(0.9698)">25.00</span>
<span class="t r" style="left:507.75px;top:482.89px;font-size:11px;font-weight:400;color:#222;transform:scaleX(1.0084)">1/1/25 12:00 AM</span>
<span class="t r" style="left:608.65px;top:482.89px;font-size:11px;font-weight:400;color:#222;transform:scaleX(1.0080)">12/31/25 12:00 AM</span>
<span class="t r" style="left:742.65px;top:482.89px;font-size:11px;font-weight:400;color:#222;transform:scaleX(0.8856)">Yes</span>
<span class="t r" style="left:799.45px;top:482.89px;font-size:11px;font-weight:400;color:#222;transform:scaleX(0.9671)">No</span>
<span class="t r" style="left:838.15px;top:482.89px;font-size:11px;font-weight:400;color:#222;transform:scaleX(0.9529)">No</span>
<span class="t r" style="left:888.25px;top:482.89px;font-size:11px;font-weight:400;color:#222;transform:scaleX(0.9324)">MONTH</span>
<span class="t r" style="left:974.25px;top:482.89px;font-size:11px;font-weight:400;color:#222;transform:scaleX(0.9057)">Price</span>
</div>
</body>
</html>
